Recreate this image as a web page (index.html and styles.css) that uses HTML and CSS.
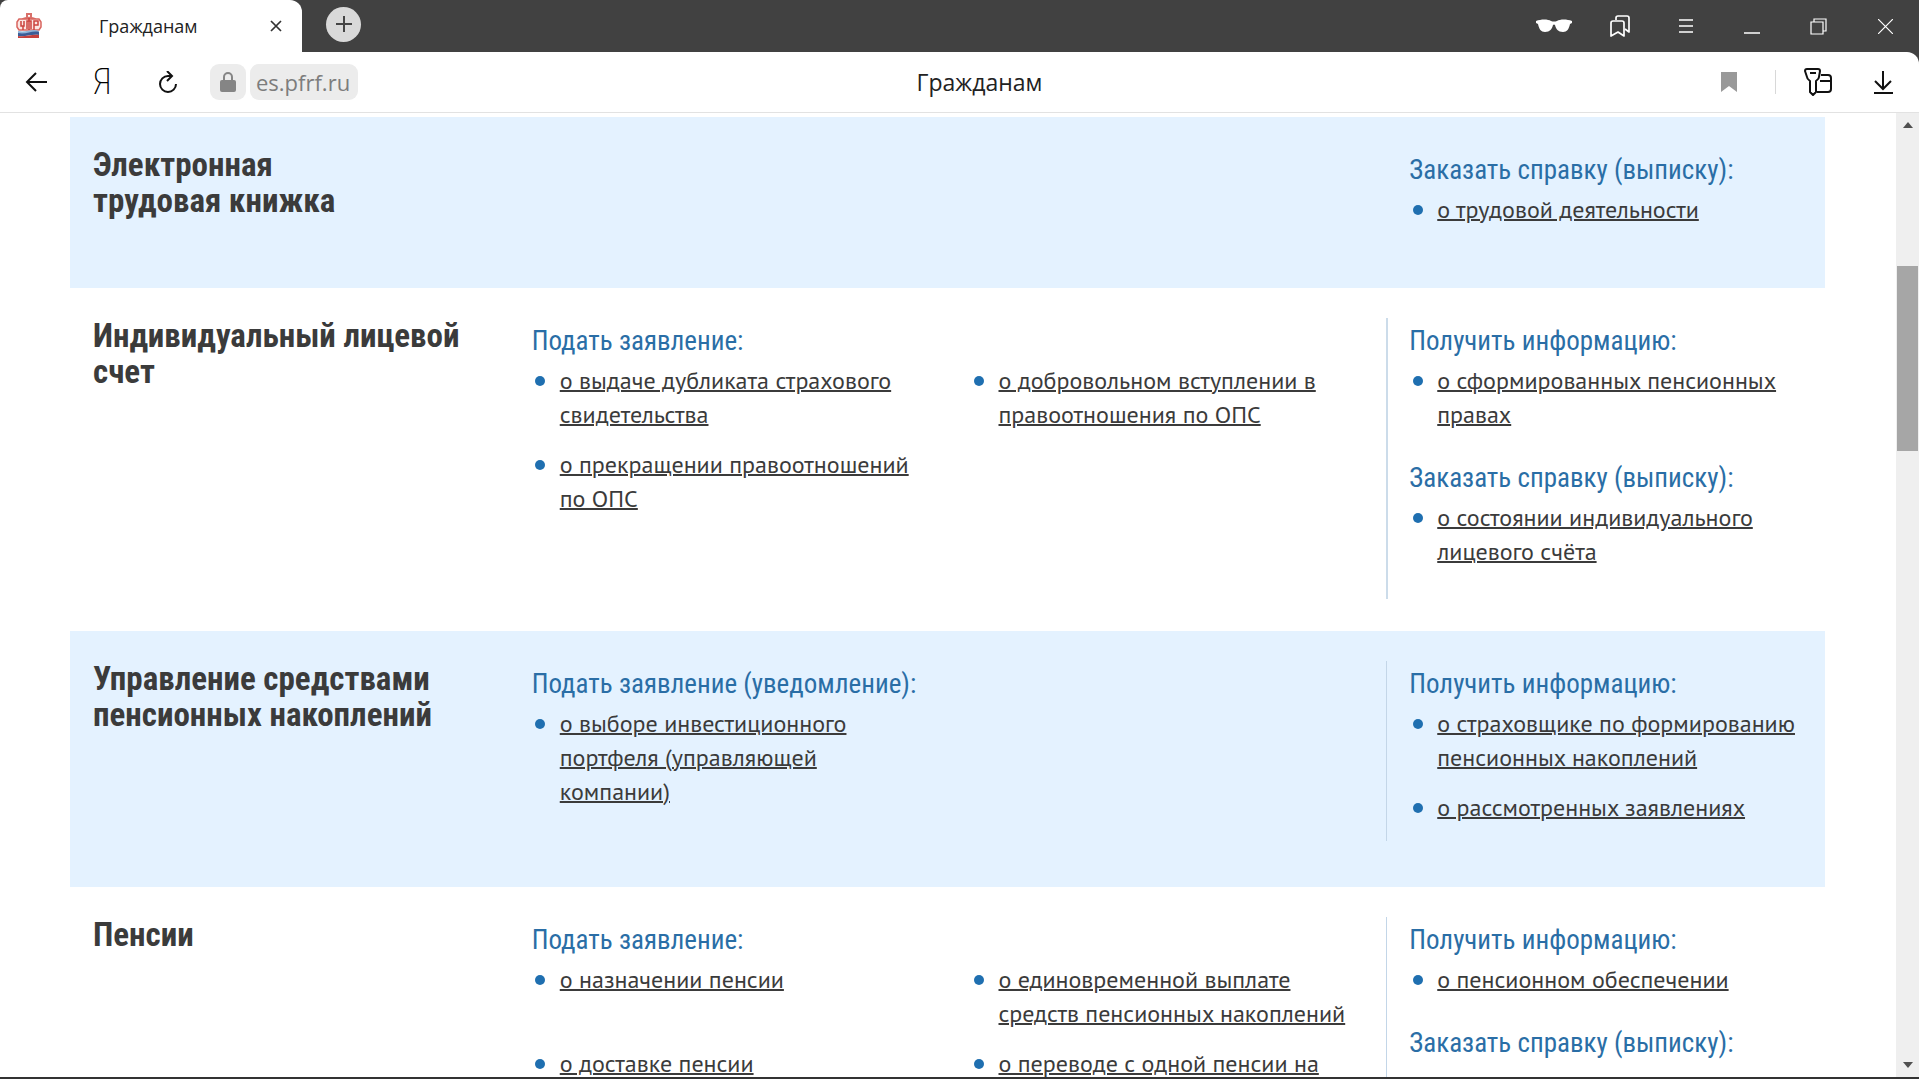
FILE: index.html
```
<!DOCTYPE html>
<html lang="ru">
<head>
<meta charset="utf-8">
<meta name="viewport" content="width=device-width, initial-scale=1">
<title>Гражданам</title>
<link rel="stylesheet" href="styles.css">
</head>
<body>
<header class="browser">
  <div class="tabbar">
    <div class="tab">
      <svg class="favicon" width="26" height="26" viewBox="0 0 26 26" aria-hidden="true">
        <path d="M11 4V1h4v3M6 7c2-3 12-3 14 0" fill="none" stroke="#d9706a" stroke-width="2"/>
        <path d="M3 6h20l2 3v5l-2 3H3l-2-3V9z" fill="#fbe6e3" stroke="#d9655f" stroke-width="1.5"/>
        <path d="M5 8v5h3V8M7 13v4M11 16V8h4v8M13 5v12M18 17V8h4v4h-4" fill="none" stroke="#cc433e" stroke-width="1.5"/>
        <path d="M2 18c8 2 14-3 21 0v2c-8-1-13 3-21 1z" fill="#8fb4d9"/>
        <path d="M2 20c8 2 14-3 21-1v3c-8-1-13 2-21 1z" fill="#3c5c96"/>
        <path d="M2 23c8 1 14-2 21-1v3H2z" fill="#c4403c"/>
      </svg>
      <span class="tab-title">Гражданам</span>
      <button class="icon-btn tab-close" aria-label="Закрыть вкладку">
        <svg width="12" height="12" viewBox="0 0 12 12"><path d="M1 1l10 10M11 1L1 11" stroke="#333" stroke-width="1.7"/></svg>
      </button>
    </div>
    <button class="icon-btn new-tab" aria-label="Новая вкладка">
      <svg width="16" height="16" viewBox="0 0 16 16"><path d="M8 0v16M0 8h16" stroke="#444" stroke-width="2"/></svg>
    </button>
    <div class="window-tools">
      <button class="icon-btn win-btn" aria-label="Инкогнито">
        <svg width="36" height="14" viewBox="0 0 36 14"><path d="M0 2C5 0 12 0 15 2q3 1 6 0C24 0 31 0 36 2v2l-2 1c-1 5-3 8-7 8-5 0-7-3-8-7q-1-1-2 0c-1 4-3 7-8 7-4 0-6-3-7-8L0 4z" fill="#fff"/></svg>
      </button>
      <button class="icon-btn win-btn" aria-label="Закладки">
        <svg width="20" height="23" viewBox="0 0 20 23" fill="none" stroke="#fff" stroke-width="1.7" stroke-linejoin="round"><path d="M6 5V3q0-2 2-2h9q2 0 2 2v14l-4-3"/><path d="M1 21V8q0-2 2-2h9q2 0 2 2v13l-6-4z"/></svg>
      </button>
      <button class="icon-btn win-btn" aria-label="Меню">
        <svg width="14" height="14" viewBox="0 0 14 14"><path d="M0 1h14M0 7h14M0 13h14" stroke="#fff" stroke-width="1.3"/></svg>
      </button>
      <button class="icon-btn win-btn" aria-label="Свернуть">
        <svg width="16" height="16" viewBox="0 0 16 16"><path d="M0 15h16" stroke="#fff" stroke-width="1.5"/></svg>
      </button>
      <button class="icon-btn win-btn" aria-label="Развернуть">
        <svg width="17" height="17" viewBox="0 0 17 17" fill="none" stroke="#fff" stroke-width="1.2"><path d="M1 4h12v12H1zM4 4V1h12v12h-3"/></svg>
      </button>
      <button class="icon-btn win-btn win-close" aria-label="Закрыть">
        <svg width="15" height="15" viewBox="0 0 15 15"><path d="M0 0l15 15M15 0L0 15" stroke="#fff" stroke-width="1.2"/></svg>
      </button>
    </div>
  </div>
  <div class="toolbar">
    <div class="toolbar-side">
      <button class="icon-btn nav-btn" aria-label="Назад">
        <svg width="22" height="20" viewBox="0 0 22 20" fill="none" stroke="#111" stroke-width="2"><path d="M22 10H2M11 1L2 10l9 9"/></svg>
      </button>
      <button class="icon-btn nav-btn ya" aria-label="Яндекс">Я</button>
      <button class="icon-btn nav-btn" aria-label="Обновить">
        <svg width="19" height="22" viewBox="0 0 19 22" fill="none" stroke="#111" stroke-width="2"><path d="M12 5H9a8 8 0 1 0 8 8M8 0l5 5-5 5"/></svg>
      </button>
      <div class="address">
        <button class="icon-btn lock" aria-label="Защищённое соединение">
          <svg width="16" height="20" viewBox="0 0 16 20"><rect y="8" width="16" height="12" rx="2" fill="#858585"/><path d="M4 9V5a4 4 0 0 1 8 0v4" fill="none" stroke="#858585" stroke-width="2"/></svg>
        </button>
        <a class="host" href="#">es.pfrf.ru</a>
      </div>
    </div>
    <div class="page-title">Гражданам</div>
    <div class="toolbar-side toolbar-end">
      <button class="icon-btn" aria-label="В закладки">
        <svg width="16" height="20" viewBox="0 0 16 20"><path d="M0 0h16v20l-8-6-8 6z" fill="#999"/></svg>
      </button>
      <span class="divider"></span>
      <button class="icon-btn key-btn" aria-label="Пароли и карты">
        <svg width="28" height="28" viewBox="0 0 28 28" fill="none" stroke="#111" stroke-width="2" stroke-linejoin="round"><path d="M17 7h7q3 0 3 3v11q0 3-3 3H13M16 13h11"/><path d="M3 1h11q2 0 2 2l-1 6q0 2-3 4v11l-3 3-3-3V13q-3-2-3-4L1 3q0-2 2-2z" fill="#fff"/><path d="M6 5h6"/></svg>
      </button>
      <button class="icon-btn" aria-label="Загрузки">
        <svg width="19" height="24" viewBox="0 0 19 24" fill="none" stroke="#111" stroke-width="2"><path d="M9 1v18M1 11l8 8 8-8M0 23h19"/></svg>
      </button>
    </div>
  </div>
</header>
<div class="viewport">
  <main class="content">
    <section class="row row-tint">
      <h2 class="row-title">Электронная<br>трудовая книжка</h2>
      <div class="info info-plain">
        <h3 class="caption">Заказать справку (выписку):</h3>
        <ul class="links"><li><a href="#">о трудовой деятельности</a></li></ul>
      </div>
    </section>
    <section class="row">
      <h2 class="row-title">Индивидуальный лицевой счет</h2>
      <div class="apply">
        <h3 class="caption">Подать заявление:</h3>
        <ul class="links links-pair">
          <li><a href="#">о выдаче дубликата страхового свидетельства</a></li>
          <li><a href="#">о добровольном вступлении в правоотношения по ОПС</a></li>
          <li><a href="#">о прекращении правоотношений по ОПС</a></li>
        </ul>
      </div>
      <div class="info info-strong">
        <h3 class="caption">Получить информацию:</h3>
        <ul class="links"><li><a href="#">о сформированных пенсионных правах</a></li></ul>
        <h3 class="caption">Заказать справку (выписку):</h3>
        <ul class="links"><li><a href="#">о состоянии индивидуального лицевого счёта</a></li></ul>
      </div>
    </section>
    <section class="row row-tint">
      <h2 class="row-title">Управление средствами пенсионных накоплений</h2>
      <div class="apply">
        <h3 class="caption">Подать заявление (уведомление):</h3>
        <ul class="links links-pair"><li><a href="#">о выборе инвестиционного портфеля (управляющей компании)</a></li></ul>
      </div>
      <div class="info">
        <h3 class="caption">Получить информацию:</h3>
        <ul class="links">
          <li><a href="#">о страховщике по формированию пенсионных накоплений</a></li>
          <li><a href="#">о рассмотренных заявлениях</a></li>
        </ul>
      </div>
    </section>
    <section class="row">
      <h2 class="row-title">Пенсии</h2>
      <div class="apply">
        <h3 class="caption">Подать заявление:</h3>
        <ul class="links links-pair">
          <li><a href="#">о назначении пенсии</a></li>
          <li><a href="#">о единовременной выплате средств пенсионных накоплений</a></li>
          <li><a href="#">о доставке пенсии</a></li>
          <li><a href="#">о переводе с одной пенсии на</a></li>
        </ul>
      </div>
      <div class="info">
        <h3 class="caption">Получить информацию:</h3>
        <ul class="links"><li><a href="#">о пенсионном обеспечении</a></li></ul>
        <h3 class="caption">Заказать справку (выписку):</h3>
      </div>
    </section>
  </main>
  <div class="scrollbar" aria-hidden="true">
    <svg width="10" height="6" viewBox="0 0 10 6"><path d="M5 0l5 6H0z" fill="#505050"/></svg>
    <div class="track"><span></span><span class="thumb"></span><span></span></div>
    <svg width="10" height="6" viewBox="0 0 10 6"><path d="M5 6l5-6H0z" fill="#505050"/></svg>
  </div>
</div>
</body>
</html>
```
FILE: styles.css
```
* { box-sizing: border-box; }

body {
  margin: 0;
  height: 100vh;
  display: flex;
  flex-direction: column;
  overflow: hidden;
  background: #fff;
  border-bottom: 2px solid #333;
  color: #3b3b3b;
  font-family: "PT Sans", "Noto Sans", sans-serif;
}

/* Browser frame */
.browser {
  flex: none;
  background: #414141;
  font-family: "Open Sans", "Noto Sans", sans-serif;
}

.icon-btn {
  display: flex;
  align-items: center;
  justify-content: center;
  border: 0;
  padding: 0;
  background: none;
}

.tabbar {
  display: flex;
  align-items: center;
  height: 52px;
}

.tab {
  display: flex;
  align-items: center;
  width: 302px;
  height: 52px;
  padding: 0 16px;
  background: #fff;
  border-radius: 8px 12px 0 0;
}

.tab-title {
  flex: 1;
  margin-left: 57px;
  font-size: 18px;
  color: #222;
}

.tab-close { width: 20px; height: 20px; }

.new-tab {
  width: 35px;
  height: 35px;
  margin: 0 auto 4px 24px;
  border-radius: 50%;
  background: #d9d9d9;
}

.window-tools { display: flex; }

.win-btn { width: 66px; height: 48px; }

.win-close { width: 68px; }

.toolbar {
  display: flex;
  align-items: center;
  height: 61px;
  padding: 0 26px 0 24px;
  background: #fff;
  border-bottom: 1px solid #e2e2e2;
  border-radius: 0 12px 0 0;
}

.toolbar-side {
  flex: 1;
  display: flex;
  align-items: center;
}

.toolbar-end { justify-content: flex-end; gap: 38px; }

.nav-btn { width: 24px; margin-right: 42px; }

.ya {
  font: 200 36px/40px "Roboto Condensed", Roboto, sans-serif;
  color: #000;
}

.address { display: flex; gap: 4px; margin-left: -12px; }

.lock, .host {
  height: 36px;
  border-radius: 9px;
  background: #ececec;
}

.lock { width: 36px; }

.host {
  padding: 0 8px 0 6px;
  font-size: 22px;
  line-height: 36px;
  color: #7d7d7d;
  text-decoration: none;
}

.page-title { margin-left: 42px; font-size: 23px; color: #222; }

.divider { width: 1px; height: 24px; background: #d8d8d8; }

.key-btn { margin: 0 4px 0 -10px; }

/* Page */
.viewport {
  flex: 1;
  min-height: 0;
  display: flex;
}

.content {
  flex: 1;
  min-width: 0;
  overflow: hidden;
  padding: 4px 71px 0 70px;
}

.row {
  display: grid;
  grid-template-columns: repeat(4, minmax(0, 1fr));
  padding: 30px 0 46px;
}

.row-tint { background: #e4f2ff; }

.row-title {
  margin: 0;
  padding-left: 23px;
  font: bold 33px/36px "Roboto Condensed", Roboto, sans-serif;
}

.apply { grid-column: span 2; }

.apply .caption { padding-left: 23px; }

.info {
  grid-column: 4;
  padding-left: 22px;
  border-left: 1px solid #c3d6e8;
}

/* The first row has no rule and sits tighter */
.info-plain {
  margin-bottom: -1px;
  border-color: transparent;
}

.info-strong {
  margin-bottom: -14px;
  padding: 0 0 14px 21px;
  border-left: 2px solid #ccdcea;
}

.caption {
  margin: 0;
  font: 27px/46px "Roboto Condensed", Roboto, sans-serif;
  color: #2a6ea6;
}

.links + .caption { margin-top: 23px; }

.links {
  margin: 0;
  padding: 0;
  list-style: none;
  font-size: 24px;
  line-height: 34px;
}

.links li {
  position: relative;
  margin-bottom: 16px;
  padding: 0 20px 0 28px;
}

.links li::before {
  content: "";
  position: absolute;
  left: 4px;
  top: 12px;
  width: 10px;
  height: 10px;
  border-radius: 50%;
  background: #1f6fb0;
}

.links-pair {
  display: grid;
  grid-template-columns: repeat(2, minmax(0, 1fr));
}

.links-pair li { padding-left: 51px; }

.links-pair li::before { left: 26px; }

.links a {
  color: inherit;
  text-decoration-thickness: 2px;
}

/* Scrollbar */
.scrollbar {
  display: flex;
  flex-direction: column;
  align-items: center;
  width: 23px;
  padding: 9px 0;
  background: #efefef;
}

.track {
  flex: 1;
  align-self: stretch;
  display: grid;
  grid-template-rows: 138fr 185fr 612fr;
  padding: 0 1px;
}

.thumb { background: #a6a6a6; }
```
